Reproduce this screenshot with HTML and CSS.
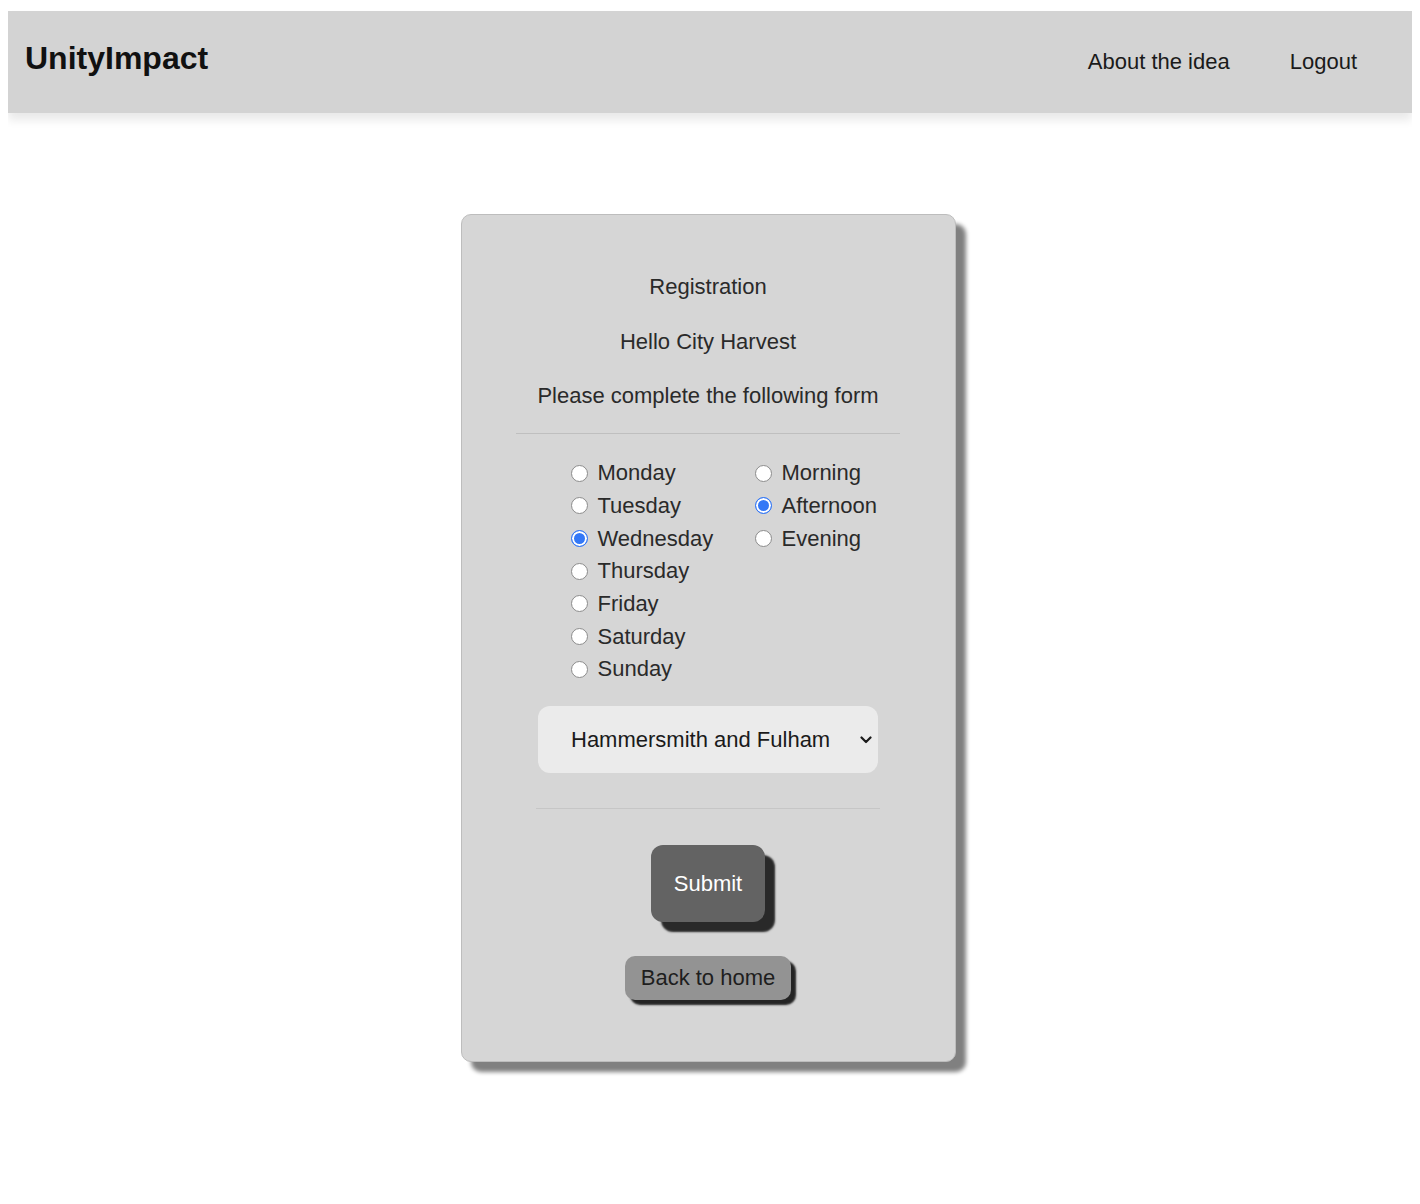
FILE: index.html
```html
<!DOCTYPE html>
<html lang="en">
<head>
<meta charset="utf-8">
<title>UnityImpact – Registration</title>
<link rel="stylesheet" href="styles.css">
</head>
<body>
<nav class="navbar">
  <a class="brand" href="#">UnityImpact</a>
  <div class="nav-links">
    <a class="nav-link" href="#">About the idea</a>
    <a class="nav-link" href="#">Logout</a>
  </div>
</nav>
<main class="page">
  <form class="card">
    <p class="card-text">Registration</p>
    <p class="card-text">Hello City Harvest</p>
    <p class="card-text">Please complete the following form</p>
    <hr class="divider divider-top">
    <div class="choices">
      <div class="choice-col choice-col-days">
        <label class="choice"><input class="radio" type="radio" name="day">Monday</label>
        <label class="choice"><input class="radio" type="radio" name="day">Tuesday</label>
        <label class="choice"><input class="radio" type="radio" name="day" checked>Wednesday</label>
        <label class="choice"><input class="radio" type="radio" name="day">Thursday</label>
        <label class="choice"><input class="radio" type="radio" name="day">Friday</label>
        <label class="choice"><input class="radio" type="radio" name="day">Saturday</label>
        <label class="choice"><input class="radio" type="radio" name="day">Sunday</label>
      </div>
      <div class="choice-col">
        <label class="choice"><input class="radio" type="radio" name="time">Morning</label>
        <label class="choice"><input class="radio" type="radio" name="time" checked>Afternoon</label>
        <label class="choice"><input class="radio" type="radio" name="time">Evening</label>
      </div>
    </div>
    <div class="select-wrap">
      <select class="borough">
        <option>Hammersmith and Fulham</option>
      </select>
      <svg class="chevron" width="12" height="8" viewBox="0 0 12 8" aria-hidden="true">
        <path d="M1.5 1.5 L6 6 L10.5 1.5" fill="none" stroke="#1a1a1a" stroke-width="2.2" stroke-linecap="round" stroke-linejoin="round"/>
      </svg>
    </div>
    <hr class="divider divider-bottom">
    <button class="btn btn-submit" type="button">Submit</button>
    <button class="btn btn-back" type="button">Back to home</button>
  </form>
</main>
</body>
</html>
```
FILE: styles.css
```css
* {
  box-sizing: border-box;
}

html {
  min-height: 100%;
}

body {
  margin: 8px;
  min-height: 1188px;
  background: #ffffff;
  font-family: "Liberation Sans", Arial, Helvetica, sans-serif;
  color: #222222;
}

.navbar {
  margin-top: 3px;
  height: 102px;
  background: #d3d3d3;
  display: flex;
  align-items: center;
  justify-content: space-between;
  padding: 0 55px 0 17px;
  box-shadow: 0 7px 9px rgba(0, 0, 0, 0.09);
}

.brand {
  font-size: 32px;
  font-weight: 700;
  color: #111111;
  text-decoration: none;
  padding-bottom: 7px;
}

.nav-links {
  display: flex;
  gap: 60px;
}

.nav-link {
  font-size: 22px;
  color: #1a1a1a;
  text-decoration: none;
}

.page {
  padding: 101px 4px 120px 0;
}

.card {
  width: 495px;
  margin: 0 auto;
  background: #d6d6d6;
  border: 1px solid #bdbdbd;
  border-radius: 10px;
  box-shadow: 10px 10px 4px #808080;
  padding: 59px 0 61px;
  display: flex;
  flex-direction: column;
  align-items: center;
}

.card-text {
  margin: 0 0 30px;
  font-size: 22px;
  line-height: 25px;
  color: #2a2a2a;
  text-align: center;
}

.card-text:nth-of-type(2) {
  margin-bottom: 29px;
}

.divider {
  border: 0;
  height: 1px;
  margin: 0;
}

.divider-top {
  width: 384px;
  background: #bfbfbf;
  margin-top: -5px;
}

.divider-bottom {
  width: 344px;
  background: #c6c6c6;
  margin-top: 35px;
}

.choices {
  align-self: stretch;
  display: grid;
  grid-template-columns: 184px auto;
  padding-left: 109px;
  margin-top: 23px;
}

.choice-col {
  display: flex;
  flex-direction: column;
}

.choice {
  display: flex;
  align-items: center;
  height: 32.67px;
  font-size: 22px;
  color: #2a2a2a;
}

.radio {
  appearance: none;
  -webkit-appearance: none;
  width: 17px;
  height: 17px;
  margin: 0 10px 0 0;
  border-radius: 50%;
  border: 1px solid #8c8c8c;
  background: #ffffff;
  flex: none;
}

.radio:checked {
  border: 1.5px solid #3478f6;
  background: #3478f6;
  box-shadow: inset 0 0 0 2px #ffffff;
}

.select-wrap {
  position: relative;
  width: 340px;
  height: 67px;
  margin-top: 20px;
}

.borough {
  appearance: none;
  -webkit-appearance: none;
  width: 100%;
  height: 100%;
  border: 0;
  border-radius: 12px;
  background: #ebebeb;
  font-family: "Liberation Sans", Arial, Helvetica, sans-serif;
  font-size: 22px;
  color: #1a1a1a;
  padding: 0 40px 0 33px;
}

.chevron {
  position: absolute;
  right: 6px;
  top: 30px;
  pointer-events: none;
}

.btn {
  border: 0;
  font-family: "Liberation Sans", Arial, Helvetica, sans-serif;
  font-size: 22px;
  line-height: 25px;
  cursor: pointer;
}

.btn-submit {
  margin-top: 36px;
  padding: 26px 23px;
  background: #636363;
  color: #ffffff;
  border-radius: 12px;
  box-shadow: 10px 10px 2px #292929;
}

.btn-back {
  margin-top: 34px;
  padding: 9px 16px 10px;
  background: #939393;
  color: #1e1e1e;
  border-radius: 10px;
  box-shadow: 5px 5px 2px #242424;
}
```
